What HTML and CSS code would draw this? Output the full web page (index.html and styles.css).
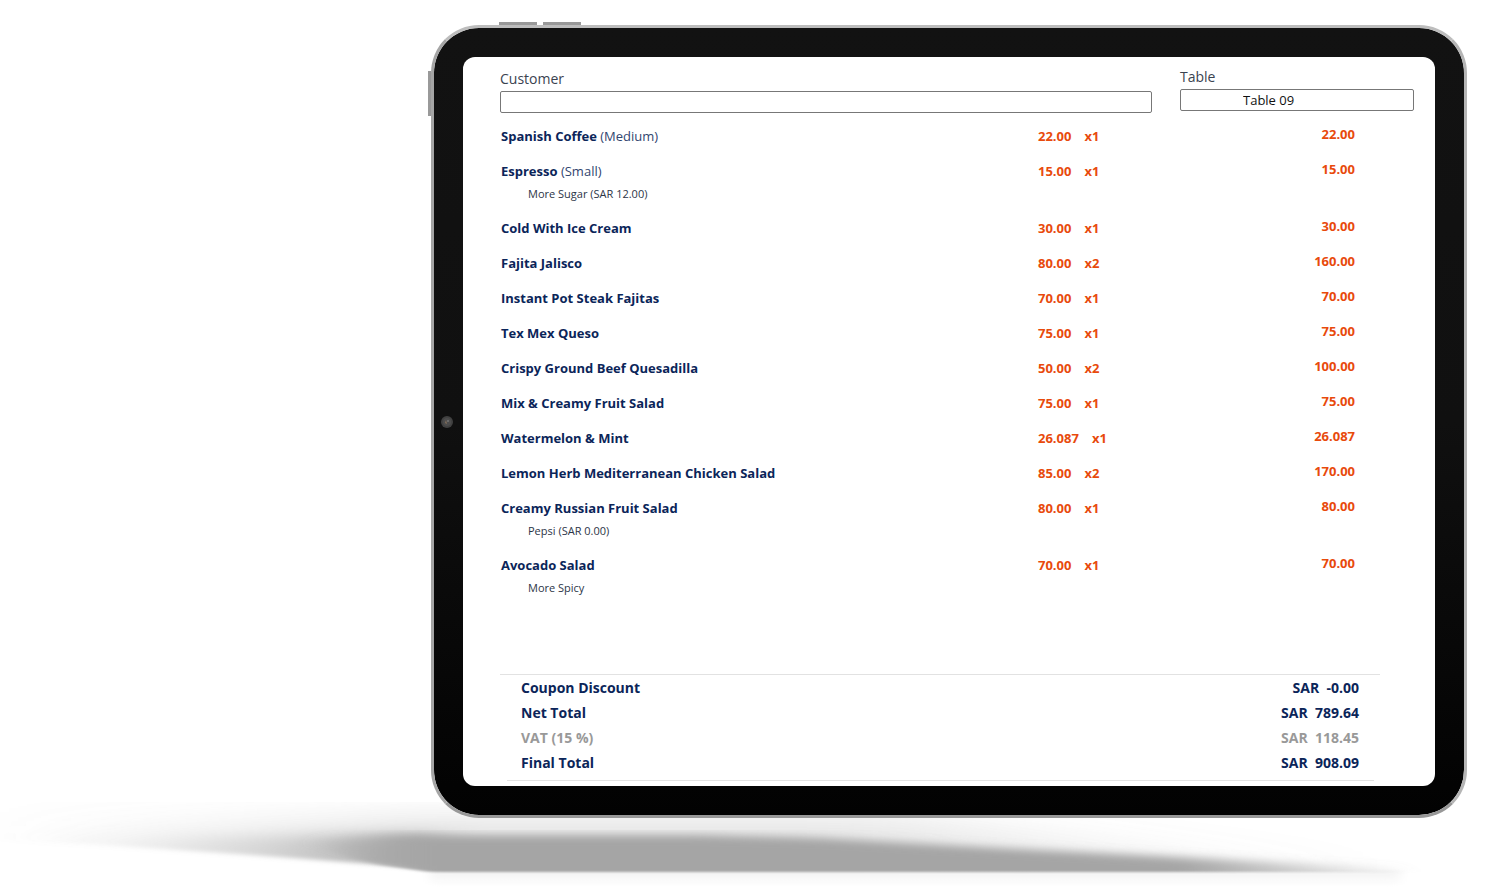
FILE: index.html
```
<!DOCTYPE html>
<html lang="en">
<head>
<meta charset="utf-8">
<title>Order summary</title>
<link rel="stylesheet" href="styles.css">
</head>
<body>
<main class="stage">
  <svg class="shadow" viewBox="0 0 1487 131" preserveAspectRatio="none" aria-hidden="true">
    <defs>
      <linearGradient id="haze" x1="0" x2="1" y1="0" y2="0">
        <stop offset="0" stop-color="#999" stop-opacity="0"/>
        <stop offset="0.3" stop-color="#999" stop-opacity="0.25"/>
        <stop offset="0.6" stop-color="#999" stop-opacity="0.25"/>
        <stop offset="1" stop-color="#999" stop-opacity="0"/>
      </linearGradient>
      <linearGradient id="tail" gradientUnits="userSpaceOnUse" x1="20" x2="430" y1="0" y2="0">
        <stop offset="0" stop-color="#999" stop-opacity="0"/>
        <stop offset="0.3" stop-color="#999" stop-opacity="0.1"/>
        <stop offset="0.6" stop-color="#999" stop-opacity="0.3"/>
        <stop offset="0.8" stop-color="#999" stop-opacity="0.55"/>
        <stop offset="1" stop-color="#999" stop-opacity="0.8"/>
      </linearGradient>
      <linearGradient id="core" gradientUnits="userSpaceOnUse" x1="310" x2="1400" y1="0" y2="0">
        <stop offset="0" stop-color="#a5a5a5" stop-opacity="0"/>
        <stop offset="0.1" stop-color="#a5a5a5"/>
        <stop offset="0.8" stop-color="#a5a5a5"/>
        <stop offset="1" stop-color="#a5a5a5" stop-opacity="0.1"/>
      </linearGradient>
      <linearGradient id="under" x1="0" x2="0" y1="0" y2="1">
        <stop offset="0" stop-color="#f3f3f3"/>
        <stop offset="1" stop-color="#fff"/>
      </linearGradient>
      <filter id="wide" x="-10%" y="-100%" width="120%" height="300%"><feGaussianBlur stdDeviation="30 14"/></filter>
      <filter id="mid" x="-20%" y="-100%" width="140%" height="300%"><feGaussianBlur stdDeviation="20 7"/></filter>
      <filter id="soft" x="-10%" y="-60%" width="120%" height="220%"><feGaussianBlur stdDeviation="10 4"/></filter>
      <filter id="fringe" x="-5%" y="-20%" width="110%" height="140%"><feGaussianBlur stdDeviation="10 2"/></filter>
      <filter id="edge" x="-5%" y="-10%" width="110%" height="120%"><feGaussianBlur stdDeviation="6 1"/></filter>
      <clipPath id="floor"><path d="M0 0H1487V110H460L400 106L250 95L100 85L0 80Z"/></clipPath>
      <clipPath id="base"><path d="M0 0H1487V112H430L380 105L330 92L280 80H0Z"/></clipPath>
    </defs>
    <path d="M430 111H1400V127H430Z" fill="url(#under)" filter="url(#edge)"/>
    <g filter="url(#fringe)">
      <g clip-path="url(#floor)">
        <path d="M0 62L420 56H900L1150 84L1380 108V118H400L0 92Z" fill="url(#haze)" filter="url(#wide)"/>
        <path d="M20 78L300 76L440 74V125H400L20 95Z" fill="url(#tail)" filter="url(#mid)"/>
      </g>
    </g>
    <g filter="url(#edge)">
      <g clip-path="url(#base)">
        <path d="M310 80L400 75H700L820 78L1000 88L1140 95L1400 109V125H400Z" fill="url(#core)" filter="url(#soft)"/>
      </g>
    </g>
  </svg>
  <section class="tablet" aria-label="Order">
    <span class="key key-up"></span>
    <span class="key key-down"></span>
    <span class="key key-power"></span>
    <svg class="camera" viewBox="0 0 12 12" aria-hidden="true">
      <circle cx="6" cy="6" r="6" fill="#414141"/>
      <circle cx="6" cy="6" r="4" fill="#4c4c4c"/>
      <path d="M5 4L6 8L4 7Z" fill="#85705c"/>
      <circle cx="7" cy="5" r="1" fill="#777"/>
    </svg>
    <div class="screen">
      <form class="fields">
        <div class="field field-customer">
          <label for="customer">Customer</label>
          <input id="customer" type="text">
        </div>
        <div class="field">
          <label for="table">Table</label>
          <input id="table" class="table-number" type="text" value="Table 09">
        </div>
      </form>
      <table class="items">
        <tbody>
          <tr><td class="name"><b>Spanish Coffee</b> (Medium)</td><td class="price">22.00<span>x1</span></td><td class="sum">22.00</td></tr>
          <tr><td class="name"><b>Espresso</b> (Small)<div class="extra">More Sugar (SAR 12.00)</div></td><td class="price">15.00<span>x1</span></td><td class="sum">15.00</td></tr>
          <tr><td class="name"><b>Cold With Ice Cream</b></td><td class="price">30.00<span>x1</span></td><td class="sum">30.00</td></tr>
          <tr><td class="name"><b>Fajita Jalisco</b></td><td class="price">80.00<span>x2</span></td><td class="sum">160.00</td></tr>
          <tr><td class="name"><b>Instant Pot Steak Fajitas</b></td><td class="price">70.00<span>x1</span></td><td class="sum">70.00</td></tr>
          <tr><td class="name"><b>Tex Mex Queso</b></td><td class="price">75.00<span>x1</span></td><td class="sum">75.00</td></tr>
          <tr><td class="name"><b>Crispy Ground Beef Quesadilla</b></td><td class="price">50.00<span>x2</span></td><td class="sum">100.00</td></tr>
          <tr><td class="name"><b>Mix &amp; Creamy Fruit Salad</b></td><td class="price">75.00<span>x1</span></td><td class="sum">75.00</td></tr>
          <tr><td class="name"><b>Watermelon &amp; Mint</b></td><td class="price">26.087<span>x1</span></td><td class="sum">26.087</td></tr>
          <tr><td class="name"><b>Lemon Herb Mediterranean Chicken Salad</b></td><td class="price">85.00<span>x2</span></td><td class="sum">170.00</td></tr>
          <tr><td class="name"><b>Creamy Russian Fruit Salad</b><div class="extra">Pepsi (SAR 0.00)</div></td><td class="price">80.00<span>x1</span></td><td class="sum">80.00</td></tr>
          <tr><td class="name"><b>Avocado Salad</b><div class="extra">More Spicy</div></td><td class="price">70.00<span>x1</span></td><td class="sum">70.00</td></tr>
        </tbody>
      </table>
      <dl class="totals">
        <div><dt>Coupon Discount</dt><dd>SAR&nbsp; -0.00</dd></div>
        <div><dt>Net Total</dt><dd>SAR&nbsp; 789.64</dd></div>
        <div class="muted"><dt>VAT (15 %)</dt><dd>SAR&nbsp; 118.45</dd></div>
        <div><dt>Final Total</dt><dd>SAR&nbsp; 908.09</dd></div>
      </dl>
      <hr class="end">
    </div>
  </section>
</main>
</body>
</html>
```
FILE: styles.css
```
* { box-sizing: border-box; }
body {
  margin: 0;
  background: #fff;
  font-family: "Open Sans", "Noto Sans", sans-serif;
  font-size: 13px;
  color: #0b2559;
}
.stage {
  position: relative;
  min-height: 100vh;
  padding: 25px 20px 73px 431px;
}
.shadow {
  position: absolute;
  left: 0;
  bottom: 0;
  width: 100%;
  height: 131px;
}
.tablet {
  position: relative;
  padding: 29px;
  border: 3px solid;
  border-color: #bdbdbd #b5b5b5 #989898 #a5a5a5;
  border-radius: 48px;
  background: linear-gradient(#121212, #101010 50%, #020202) padding-box;
}
.key {
  position: absolute;
  background: #999;
}
.key-up, .key-down { top: -6px; width: 38px; height: 3px; }
.key-up { left: 65px; }
.key-down { left: 109px; }
.key-power { left: -6px; top: 43px; width: 3px; height: 45px; }
.camera {
  position: absolute;
  left: 7px;
  top: 50%;
  width: 12px;
  height: 12px;
  margin-top: -6px;
}
.screen {
  padding: 11px 21px 5px 37px;
  border-radius: 12px;
  background: #fff;
}
.fields {
  display: grid;
  grid-template-columns: 1fr 234px;
  gap: 28px;
  align-items: start;
}
.field label {
  display: block;
  line-height: 18px;
  margin-bottom: 3px;
  font-size: 14px;
  color: #3a4350;
}
.field-customer { padding-top: 2px; }
.field input {
  display: block;
  width: 100%;
  height: 22px;
  padding: 0 8px;
  border: 1px solid #777;
  border-radius: 2px;
  background: #fff;
  font: inherit;
  color: #111;
}
.field .table-number { padding-left: 62px; }
.items {
  width: 100%;
  margin-top: 11px;
  border-collapse: collapse;
}
.items td {
  padding: 0 0 11px;
  vertical-align: top;
  line-height: 24px;
}
.items b { font-weight: 700; }
.items .name { padding-left: 1px; color: #31456f; }
.name b { color: #0b2559; }
.extra {
  padding-left: 27px;
  font-size: 11px;
  line-height: 22px;
  color: #2c3547;
}
.items .price, .items .sum {
  font-weight: 700;
  color: #e84a0c;
}
.price { width: 142px; }
.price span { margin-left: 13px; }
.items .sum {
  width: 234px;
  padding-right: 59px;
  line-height: 20px;
  text-align: right;
}
.totals {
  margin: 64px 34px 0 0;
  padding: 0 21px 5px;
  border-top: 1px solid #e2e2e2;
  font-size: 14px;
  font-weight: 700;
  line-height: 25px;
}
.totals div { display: flex; justify-content: space-between; }
.totals dd { margin: 0; }
.totals .muted { color: #999; }
.end {
  margin: 0 40px 0 7px;
  border: 0;
  border-top: 1px solid #e2e2e2;
}
```
